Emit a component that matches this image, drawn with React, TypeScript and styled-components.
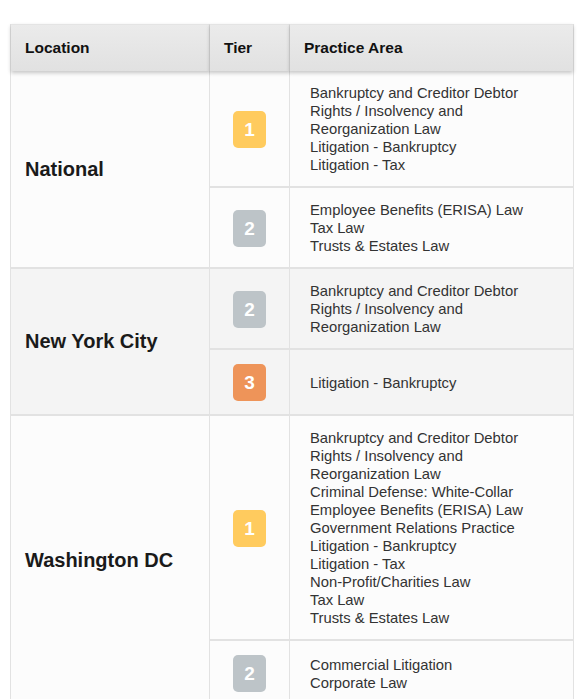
import * as React from 'react';
import styled, { createGlobalStyle } from 'styled-components';

const GlobalStyle = createGlobalStyle`
	body {
		margin: 0;
		background: #ffffff;
		font-family: "Liberation Sans", Arial, sans-serif;
	}
`;

const tierColors: { [k: number]: string } = {
	1: '#ffcb5e',
	2: '#bdc4c8',
	3: '#ee9459',
};

interface Entry {
	tier: number;
	areas: string[];
}

interface LocationGroup {
	name: string;
	entries: Entry[];
}

const data: LocationGroup[] = [
	{
		name: 'National',
		entries: [
			{
				tier: 1,
				areas: [
					'Bankruptcy and Creditor Debtor',
					'Rights / Insolvency and',
					'Reorganization Law',
					'Litigation - Bankruptcy',
					'Litigation - Tax',
				],
			},
			{ tier: 2, areas: ['Employee Benefits (ERISA) Law', 'Tax Law', 'Trusts & Estates Law'] },
		],
	},
	{
		name: 'New York City',
		entries: [
			{ tier: 2, areas: ['Bankruptcy and Creditor Debtor', 'Rights / Insolvency and', 'Reorganization Law'] },
			{ tier: 3, areas: ['Litigation - Bankruptcy'] },
		],
	},
	{
		name: 'Washington DC',
		entries: [
			{
				tier: 1,
				areas: [
					'Bankruptcy and Creditor Debtor',
					'Rights / Insolvency and',
					'Reorganization Law',
					'Criminal Defense: White-Collar',
					'Employee Benefits (ERISA) Law',
					'Government Relations Practice',
					'Litigation - Bankruptcy',
					'Litigation - Tax',
					'Non-Profit/Charities Law',
					'Tax Law',
					'Trusts & Estates Law',
				],
			},
			{ tier: 2, areas: ['Commercial Litigation', 'Corporate Law'] },
		],
	},
];

const Page = styled.div`
	padding: 24px 0 0 10px;
`;

const Table = styled.table`
	width: 562px;
	border-collapse: separate;
	border-spacing: 0;
	border: 1px solid #e2e2e2;
	border-top: none;
	table-layout: fixed;
	font-family: "Liberation Sans", Arial, sans-serif;
`;

const HeadCell = styled.th<{ $w: number }>`
	position: relative;
	z-index: 1;
	width: ${props => props.$w}px;
	height: 47px;
	box-sizing: border-box;
	padding: 0 14px;
	text-align: left;
	font-size: 15.5px;
	font-weight: bold;
	color: #111111;
	background: linear-gradient(#ebebeb, #e1e1e1);
	border-top: 1px solid #e4e4e4;
	border-right: 1px solid #d6d6d6;
	box-shadow: 0 2px 4px rgba(0, 0, 0, 0.22);
	&:last-child {
		border-right: none;
	}
`;

const Row = styled.tr<{ $shade: boolean }>`
	background: ${props => (props.$shade ? '#f4f4f4' : '#fcfcfc')};
`;

const LocationCell = styled.td<{ $last: boolean }>`
	padding: 0 14px;
	font-size: 20px;
	font-weight: bold;
	color: #1a1a1a;
	vertical-align: middle;
	border-right: 1px solid #e2e2e2;
	border-bottom: ${props => (props.$last ? 'none' : '2px solid #e2e2e2')};
`;

const TierCell = styled.td<{ $sep: boolean }>`
	padding: 14px 0 13px;
	text-align: center;
	vertical-align: middle;
	line-height: 0;
	border-right: 1px solid #e2e2e2;
	border-bottom: ${props => (props.$sep ? '2px solid #e2e2e2' : 'none')};
`;

const Badge = styled.span<{ $color: string }>`
	display: inline-flex;
	align-items: center;
	justify-content: center;
	width: 33px;
	height: 37px;
	border-radius: 5px;
	background: ${props => props.$color};
	color: #ffffff;
	font-size: 19px;
	line-height: 1;
	font-weight: bold;
	vertical-align: middle;
`;

const AreaCell = styled.td<{ $sep: boolean }>`
	padding: 13px 10px 12px 20px;
	font-size: 14.8px;
	line-height: 18px;
	color: #333333;
	vertical-align: middle;
	border-bottom: ${props => (props.$sep ? '2px solid #e2e2e2' : 'none')};
`;

const AreaLine = styled.div`
	white-space: nowrap;
`;

export default function App() {
	return (
		<Page>
			<GlobalStyle />
			<Table>
				<thead>
					<tr>
						<HeadCell $w={199}>Location</HeadCell>
						<HeadCell $w={80}>Tier</HeadCell>
						<HeadCell $w={283}>Practice Area</HeadCell>
					</tr>
				</thead>
				<tbody>
					{data.map((group, gi) =>
						group.entries.map((entry, ei) => {
							const lastGroup = gi === data.length - 1;
							const lastEntry = ei === group.entries.length - 1;
							const sep = !(lastGroup && lastEntry);
							return (
								<Row key={`${gi}-${ei}`} $shade={gi % 2 === 1}>
									{ei === 0 && (
										<LocationCell rowSpan={group.entries.length} $last={lastGroup}>
											{group.name}
										</LocationCell>
									)}
									<TierCell $sep={sep}>
										<Badge $color={tierColors[entry.tier]}>{entry.tier}</Badge>
									</TierCell>
									<AreaCell $sep={sep}>
										{entry.areas.map(a => (
											<AreaLine key={a}>{a}</AreaLine>
										))}
									</AreaCell>
								</Row>
							);
						})
					)}
				</tbody>
			</Table>
		</Page>
	);
}
